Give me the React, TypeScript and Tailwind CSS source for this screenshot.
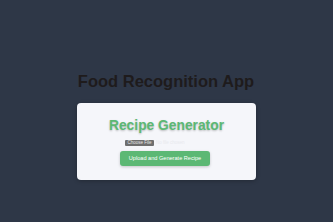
export default function App() {
  return (
    <div className="w-[333px] h-[222px] bg-[#2e3747] flex flex-col items-center pt-[72px]" style={{ fontFamily: '"Liberation Sans", Arial, sans-serif' }}>
      <h1 className="text-[16.5px] leading-[19px] font-bold text-[#1e1b1c] ml-[-1px]">Food Recognition App</h1>
      <div className="mt-[12px] w-[179px] h-[77px] bg-[#f5f6fa] rounded-[4px] shadow-[0_1px_4px_rgba(0,0,0,0.25)] flex flex-col items-center pt-[15px]">
        <h2 className="text-[13.8px] leading-[16px] font-bold text-[#5cb874] [text-shadow:0_1px_2px_rgba(0,0,0,0.25)]">Recipe Generator</h2>
        <div className="mt-[6px] flex items-center self-start ml-[48px] gap-[2px]">
          <span className="bg-[#6e6e6e] text-[#e6e6e6] text-[4.5px] leading-[6px] px-[2.5px] rounded-[1px]">Choose File</span>
          <span className="text-[#e8e9ee] text-[4.5px] leading-[6px]">No file chosen</span>
        </div>
        <button className="mt-[5px] ml-[-3px] w-[90px] h-[15px] bg-[#5cb874] text-white text-[5.6px] rounded-[3px] shadow-[0_1px_3px_rgba(0,0,0,0.2)]">Upload and Generate Recipe</button>
      </div>
    </div>
  );
}
